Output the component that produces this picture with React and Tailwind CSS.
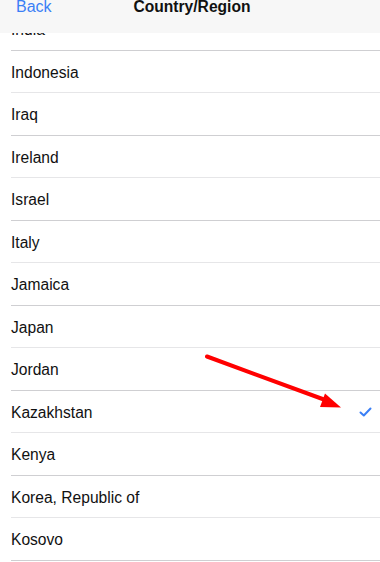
const countries = [
  "India",
  "Indonesia",
  "Iraq",
  "Ireland",
  "Israel",
  "Italy",
  "Jamaica",
  "Japan",
  "Jordan",
  "Kazakhstan",
  "Kenya",
  "Korea, Republic of",
  "Kosovo",
];

export default function App() {
  const selected = "Kazakhstan";

  return (
    <div
      className="relative w-[380px] h-[562px] overflow-hidden bg-white text-[#111]"
      style={{ fontFamily: '"Liberation Sans", Arial, sans-serif' }}
    >
      <ul className="pt-[8px]">
        {countries.map((name, i) => (
          <li
            key={name}
            className={
              "ml-[11px] h-[42.5px] flex items-center pr-[8px] border-b " +
              (i % 2 === 0 ? "border-[#cfcfd2]" : "border-[#e6e6e8]")
            }
          >
            <span className="flex-1 text-[15.6px] pt-[2px]">{name}</span>
            {name === selected && (
              <svg width="13" height="10" viewBox="0 0 13 10" className="mt-[1px]">
                <path
                  d="M1.5 5.5 L4.8 8.5 L11.5 1.5"
                  fill="none"
                  stroke="#3a7ff6"
                  strokeWidth="2"
                  strokeLinecap="round"
                  strokeLinejoin="round"
                />
              </svg>
            )}
          </li>
        ))}
      </ul>

      <div className="absolute top-0 left-0 right-0 h-[33px] bg-[#f7f7f7]">
        <div className="relative h-[15px] flex items-center justify-center -mt-[1px]">
          <span className="absolute left-[16px] text-[16px] text-[#3a7ff6]">Back</span>
          <span className="text-[15.6px] font-bold pl-[4px]">Country/Region</span>
        </div>
      </div>

      <svg
        className="absolute top-0 left-0 pointer-events-none"
        width="380"
        height="562"
      >
        <line
          x1="207"
          y1="356.5"
          x2="328"
          y2="401"
          stroke="#ff0000"
          strokeWidth="4"
          strokeLinecap="round"
        />
        <polygon points="341,407.5 325,393.5 320,407" fill="#ff0000" />
      </svg>
    </div>
  );
}
